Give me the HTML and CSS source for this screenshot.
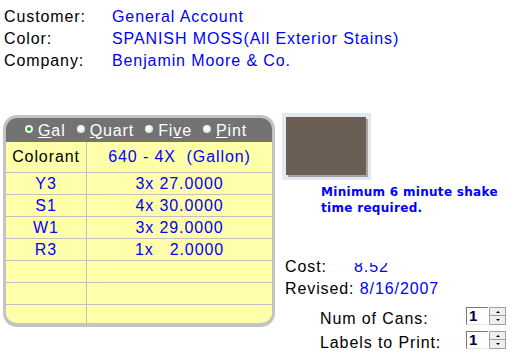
FILE: index.html
```html
<!DOCTYPE html>
<html>
<head>
<meta charset="utf-8">
<link rel="stylesheet" href="styles.css">
</head>
<body>
<div class="info">
  <span class="lbl">Customer:</span><span class="val">General Account</span>
  <span class="lbl">Color:</span><span class="val">SPANISH MOSS(All Exterior Stains)</span>
  <span class="lbl">Company:</span><span class="val">Benjamin Moore &amp; Co.</span>
</div>
<div class="main">
  <div class="panel">
    <div class="sizes">
      <span class="opt"><span class="radio on"></span><span><u>G</u>al</span></span>
      <span class="opt"><span class="radio"></span><span><u>Q</u>uart</span></span>
      <span class="opt"><span class="radio"></span><span>Fi<u>v</u>e</span></span>
      <span class="opt"><span class="radio"></span><span><u>P</u>int</span></span>
    </div>
    <div class="grid">
      <div class="c1">Colorant</div><div class="c2 blue">640 - 4X&nbsp; (Gallon)</div>
      <div class="c1 blue">Y3</div><div class="c2 blue">3x 27.0000</div>
      <div class="c1 blue">S1</div><div class="c2 blue">4x 30.0000</div>
      <div class="c1 blue">W1</div><div class="c2 blue">3x 29.0000</div>
      <div class="c1 blue">R3</div><div class="c2 blue">1x   2.0000</div>
      <div class="c1"></div><div class="c2"></div>
      <div class="c1"></div><div class="c2"></div>
      <div class="c1 last"></div><div class="c2 last"></div>
    </div>
  </div>
  <div class="side">
    <div class="swatch-frame"><div class="swatch"></div></div>
    <div class="note">Minimum 6 minute shake<br>time required.</div>
    <div class="cost">
      <div><span class="clbl">Cost:</span><span class="val clipped">8.52</span></div>
      <div>Revised: <span class="val">8/16/2007</span></div>
    </div>
    <div class="counts">
      <div class="crow">
        <span class="qlbl">Num of Cans:</span>
        <span class="spin"><span class="box">1</span><span class="btns"><span class="btn up"></span><span class="btn down"></span></span></span>
      </div>
      <div class="crow">
        <span class="qlbl">Labels to Print:</span>
        <span class="spin"><span class="box">1</span><span class="btns"><span class="btn up"></span><span class="btn down"></span></span></span>
      </div>
    </div>
  </div>
</div>
</body>
</html>
```
FILE: styles.css
```css
html, body {
  margin: 0;
  padding: 0;
  background: #ffffff;
}
body {
  width: 512px;
  height: 356px;
  overflow: hidden;
  font-family: "Liberation Sans", Arial, sans-serif;
  font-size: 16px;
  letter-spacing: 0.9px;
  color: #000000;
}
.info {
  display: grid;
  grid-template-columns: 108px auto;
  line-height: 22px;
  padding: 6px 0 0 4px;
}
.val, .blue {
  color: #0000ff;
}
.main {
  display: flex;
  align-items: flex-start;
  margin-top: 41px;
}
.panel {
  box-sizing: border-box;
  width: 272px;
  height: 212px;
  margin: 2px 0 0 3px;
  border: 3px solid #c3c3c3;
  border-bottom-width: 4px;
  border-radius: 14px;
  overflow: hidden;
  background: #ffffaa;
  display: flex;
  flex-direction: column;
}
.sizes {
  height: 24px;
  flex: none;
  background: #737373;
  color: #ffffff;
  display: flex;
  align-items: center;
  gap: 11px;
  padding-left: 19px;
  line-height: 23px;
}
.sizes u {
  text-underline-offset: 1px;
}
.opt {
  display: flex;
  align-items: center;
}
.radio {
  width: 8px;
  height: 8px;
  border-radius: 50%;
  margin: -3px 5px 0 0;
  background: radial-gradient(circle at 40% 40%, #ffffff 0, #f0f0f0 45%, #c8c8c8 100%);
}
.radio.on {
  background: radial-gradient(circle at 50% 50%, #1f9a2a 0, #2aa836 1.6px, #ffffff 2.4px, #eeeeee 60%, #c0c0c0 100%);
}
.grid {
  flex: 1;
  display: grid;
  grid-template-columns: 81px 1fr;
  grid-template-rows: 31px repeat(6, 22px) 1fr;
}
.c1, .c2 {
  box-sizing: border-box;
  border-bottom: 1px solid #c0c0c0;
  display: flex;
  align-items: center;
  justify-content: center;
  white-space: pre;
}
.c1 {
  border-right: 1px solid #c0c0c0;
}
.last {
  border-bottom: none;
}
.side {
  margin-left: 7px;
  width: 230px;
}
.swatch-frame {
  box-sizing: border-box;
  width: 89px;
  height: 67px;
  padding: 4px 0 0 4px;
  background: #e1eaf2;
}
.swatch {
  width: 80px;
  height: 58px;
  background: #6b5e54;
  box-shadow: 2px 2px 0 #a3a3a3;
}
.note {
  margin: 4px 0 0 39px;
  font-family: "DejaVu Sans", Verdana, sans-serif;
  font-weight: 700;
  font-size: 12px;
  letter-spacing: 0.3px;
  line-height: 16px;
  color: #0000ff;
}
.cost {
  margin: 40px 0 0 3px;
  line-height: 22px;
}
.clbl {
  display: inline-block;
  width: 69px;
}
.clipped {
  display: inline-block;
  clip-path: inset(7px 0 0 0);
}
.counts {
  margin: 8px 0 0 38px;
}
.crow {
  display: flex;
  align-items: flex-start;
  height: 24px;
  line-height: 22px;
}
.qlbl {
  width: 146px;
  flex: none;
}
.spin {
  display: flex;
  height: 18px;
  margin-top: -1px;
}
.box {
  box-sizing: border-box;
  width: 22px;
  height: 18px;
  border-left: 1px solid #7a7a7a;
  border-top: 1px solid #7a7a7a;
  border-bottom: 1px solid #e6e6e6;
  background: #ffffff;
  font-size: 15px;
  line-height: 16px;
  letter-spacing: 0;
  padding-left: 2px;
  color: #000040;
  font-weight: 700;
}
.btns {
  display: flex;
  flex-direction: column;
  margin-left: 1px;
  width: 17px;
}
.btn {
  box-sizing: border-box;
  height: 9px;
  border: 1px solid #a0a0a0;
  background: #efefef;
  display: flex;
  align-items: center;
  justify-content: center;
}
.btn + .btn {
  border-top: none;
}
.btn::after {
  content: "";
  width: 0;
  height: 0;
  border-left: 2px solid transparent;
  border-right: 2px solid transparent;
}
.up::after {
  border-bottom: 2px solid #000000;
}
.down::after {
  border-top: 2px solid #000000;
}
```
